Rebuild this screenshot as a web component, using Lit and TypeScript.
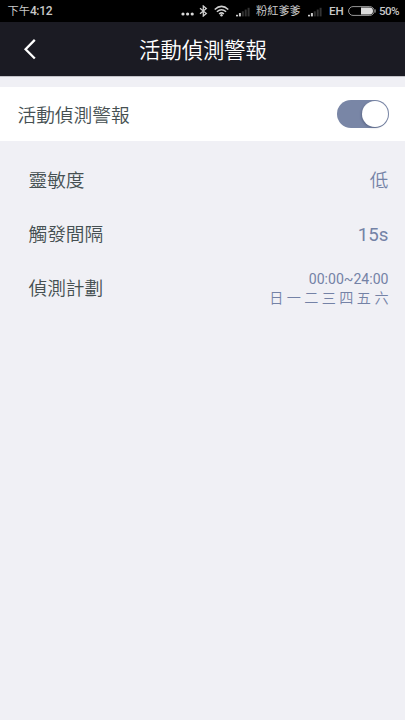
import { LitElement, html, css, svg } from "lit";
import { customElement, property } from "lit/decorators.js";

@customElement("status-bar")
class StatusBar extends LitElement {
  static styles = css`
    :host {
      display: flex;
      align-items: center;
      height: 22px;
      box-sizing: border-box;
      padding: 0 6px 0 7.5px;
      background: #000;
      color: #c9c9c9;
      font-size: 12px;
      line-height: 22px;
      font-weight: 500;
      white-space: nowrap;
    }
    svg { display: block; flex: none; }
    .time { flex: 1; display: flex; font-size: 12px; letter-spacing: -0.35px; }
    .half { font-size: 11.2px; font-weight: 400; padding-top: 1px; line-height: 21px; letter-spacing: 0; }
    .dots { margin: 2px 5px 0 0; }
    .bt { margin-right: 6px; }
    .wifi { margin-right: 7px; }
    .sig { margin: 2px 6px 0 0; }
    .carrier { font-size: 11.2px; font-weight: 400; width: 45px; margin-right: 7px; padding-top: 2px; line-height: 20px; }
    .net { font-size: 11.6px; width: 15px; margin: 0 4px 0 1px; }
    .bat { margin-right: 3px; }
    .pct { font-size: 11.6px; width: 20px; letter-spacing: -0.6px; }
  `;

  private signal() {
    return html`<svg class="sig" width="14" height="10" viewBox="0 0 14 10">
      ${[0, 1, 2, 3, 4].map(
        (i) => svg`<rect x=${i * 2.9} y=${7.8 - i * 1.75} width="2" height=${1.6 + i * 1.75} fill=${i < 2 ? "#d0d0d0" : "#333"}/>`
      )}
    </svg>`;
  }

  render() {
    return html`
      <span class="time"><span class="half">下午</span>4:12</span>
      <svg class="dots" width="13" height="10" viewBox="0 0 13 10" fill="#d8d8d8">
        <circle cx="2" cy="7" r="1.6"/><circle cx="6.6" cy="7" r="1.6"/><circle cx="11.2" cy="7" r="1.6"/>
      </svg>
      <svg class="bt" width="9" height="12" viewBox="0 0 9 12" fill="none" stroke="#d0d0d0" stroke-width="1.3">
        <path d="M1 3.2L7.3 8.5L4.3 11V1L7.3 3.5L1 8.8"/>
      </svg>
      <svg class="wifi" width="15" height="12" viewBox="0 0 15 12" fill="none" stroke="#d0d0d0" stroke-width="1.5">
        <path d="M.7 4.5Q7.5 -1.8 14.3 4.5M2.9 6.8Q7.5 2.6 12.1 6.8M5.1 9Q7.5 6.8 9.9 9"/>
        <circle cx="7.5" cy="10.3" r="1.2" fill="#d0d0d0" stroke="none"/>
      </svg>
      ${this.signal()}
      <span class="carrier">粉紅爹爹</span>
      ${this.signal()}
      <span class="net">EH</span>
      <svg class="bat" width="28" height="10" viewBox="0 0 28 10">
        <rect x=".6" y=".6" width="25.6" height="8.8" rx="4.4" fill="none" stroke="#989898"/>
        <path d="M13 1.6H21.6a3.4 3.4 0 0 1 0 6.8H13z" fill="#dcdcdc"/>
        <path d="M27.2 3.4v3.2" stroke="#989898"/>
      </svg>
      <span class="pct">50%</span>
    `;
  }
}

@customElement("nav-header")
class NavHeader extends LitElement {
  @property() heading = "";
  static styles = css`
    :host {
      display: grid;
      grid-template-columns: 60px 1fr 60px;
      align-items: center;
      height: 55px;
      box-sizing: border-box;
      background: #1b1b23;
      border-bottom: 1px solid #c2c2c8;
      color: #fff;
    }
    .back { display: block; margin-left: 23px; }
    .title { padding: 4px 0 0 1px; text-align: center; font-size: 21.3px; font-weight: 350; line-height: 50px; white-space: nowrap; }
  `;
  render() {
    return html`
      <svg class="back" width="14" height="22" viewBox="0 0 14 22" fill="none" stroke="#fff" stroke-width="2.3">
        <path d="M11.8 1.9L2.6 11.2L11.8 20.5"/>
      </svg>
      <span class="title">${this.heading}</span>
    `;
  }
}

@customElement("toggle-switch")
class ToggleSwitch extends LitElement {
  static styles = css`
    :host {
      display: flex;
      justify-content: flex-end;
      align-items: center;
      box-sizing: border-box;
      width: 52.5px;
      height: 28.5px;
      padding: 1px;
      border-radius: 15px;
      background: #7986a6;
    }
    .knob {
      width: 26px;
      height: 26px;
      border-radius: 50%;
      background: #fff;
      box-shadow: -1px 1px 2px rgba(40, 50, 80, 0.3);
    }
  `;
  render() {
    return html`<span class="knob"></span>`;
  }
}

@customElement("setting-row")
class SettingRow extends LitElement {
  @property() label = "";
  static styles = css`
    :host {
      display: flex;
      align-items: center;
      justify-content: space-between;
      height: 54px;
      box-sizing: border-box;
      padding: 0 16.5px 0 28.5px;
      font-size: 18.7px;
      font-weight: 350;
      line-height: 50px;
      color: #465052;
      white-space: nowrap;
    }
    .label { padding-top: var(--label-drop, 1px); }
    .value { color: #7482a6; }
  `;
  render() {
    return html`<span class="label">${this.label}</span><span class="value"><slot></slot></span>`;
  }
}

@customElement("app-root")
class AppRoot extends LitElement {
  static styles = css`
    :host {
      display: block;
      min-height: 720px;
      background: #f0f0f5;
      font-family: Roboto, "Noto Sans CJK TC", sans-serif;
    }
    .main-row {
      --label-drop: 3px;
      margin: 10px 0 12px;
      padding: 0 16px 0 17.5px;
      background: #fff;
    }
    .level { display: block; padding-top: 1px; }
    .interval { display: block; padding-top: 1px; font-weight: 400; }
    .plan { display: flex; flex-direction: column; align-items: flex-end; padding-top: 2px; font-size: 14.1px; line-height: 19px; }
    .hours { font-weight: 400; }
    .days { font-size: 14.1px; }
  `;
  render() {
    return html`
      <status-bar></status-bar>
      <nav-header heading="活動偵測警報"></nav-header>
      <setting-row class="main-row" label="活動偵測警報"><toggle-switch></toggle-switch></setting-row>
      <setting-row label="靈敏度"><span class="level">低</span></setting-row>
      <setting-row label="觸發間隔"><span class="interval">15s</span></setting-row>
      <setting-row label="偵測計劃">
        <div class="plan">
          <span class="hours">00:00~24:00</span>
          <span class="days">日 一 二 三 四 五 六</span>
        </div>
      </setting-row>
    `;
  }
}
